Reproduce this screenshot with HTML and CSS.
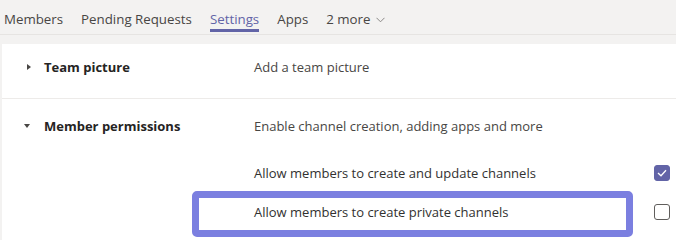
FILE: index.html
```html
<!DOCTYPE html>
<html lang="en">
<head>
    <meta charset="UTF-8">
    <meta name="viewport" content="width=device-width, initial-scale=1.0">
    <title>Team settings</title>
    <link rel="stylesheet" href="styles.css">
</head>
<body>
    <nav class="tabs">
        <span class="tab">Members</span>
        <span class="tab">Pending Requests</span>
        <span class="tab active">Settings</span>
        <span class="tab">Apps</span>
        <span class="tab more">2 more
            <svg width="9" height="6" viewBox="0 0 9 6"><path d="M0.5 0.8 L4.5 4.8 L8.5 0.8" fill="none" stroke="#8a8886" stroke-width="1"/></svg>
        </span>
    </nav>
    <div class="panel">
        <div class="section">
            <div class="head">
                <span class="caret right"></span>
                <span class="name">Team picture</span>
            </div>
            <div class="desc">Add a team picture</div>
        </div>
        <div class="section open">
            <div class="head">
                <span class="caret down"></span>
                <span class="name">Member permissions</span>
            </div>
            <div class="desc">Enable channel creation, adding apps and more</div>
        </div>
        <div class="option">
            <span class="opt-text">Allow members to create and update channels</span>
            <span class="check checked">
                <svg width="10" height="8" viewBox="0 0 10 8"><path d="M1 4 L4 6.8 L9 1.2" fill="none" stroke="#fff" stroke-width="1.3"/></svg>
            </span>
        </div>
        <div class="option marked">
            <span class="opt-text">Allow members to create private channels</span>
            <span class="check"></span>
            <span class="highlight"></span>
        </div>
    </div>
</body>
</html>
```
FILE: styles.css
```css
body {
    margin: 0;
    background-color: #f3f2f1;
    font-family: "Open Sans", "Noto Sans", sans-serif;
    color: #252423;
}
.tabs {
    display: flex;
    align-items: flex-start;
    gap: 18px;
    height: 35px;
    padding-left: 4px;
    border-bottom: 1px solid #e6e4e2;
    box-sizing: border-box;
}
.tab {
    font-size: 13.3px;
    line-height: 18px;
    color: #484644;
    padding-top: 10px;
    height: 29px;
    box-sizing: border-box;
}
.tab.active {
    color: #6264a7;
    border-bottom: 3px solid #6264a7;
    height: 32px;
}
.tab.more {
    display: flex;
    align-items: center;
    gap: 5px;
    height: 28px;
}
.tab.more svg {
    margin-top: 1px;
}
.panel {
    background: #fff;
    margin: 9px 0 0 2px;
    height: 200px;
}
.section {
    display: flex;
    box-sizing: border-box;
    height: 55px;
    padding-top: 14px;
    align-items: flex-start;
    border-bottom: 1px solid #edebe9;
}
.section.open {
    border-bottom: none;
    height: 54px;
    padding-top: 18px;
}
.head {
    display: flex;
    align-items: center;
    width: 252px;
}
.caret {
    width: 0;
    height: 0;
}
.caret.right {
    border-top: 3px solid transparent;
    border-bottom: 3px solid transparent;
    border-left: 4px solid #484644;
    margin-left: 25px;
    margin-right: 13px;
}
.caret.down {
    border-left: 3px solid transparent;
    border-right: 3px solid transparent;
    border-top: 4px solid #484644;
    margin-left: 22px;
    margin-right: 14px;
}
.name {
    font-size: 13px;
    line-height: 18px;
    font-weight: 700;
}
.desc {
    font-size: 13px;
    line-height: 18px;
    color: #484644;
}
.option {
    display: flex;
    align-items: center;
    justify-content: space-between;
    height: 39px;
    padding-left: 252px;
    padding-right: 6px;
    position: relative;
}
.opt-text {
    font-size: 13px;
    color: #323130;
}
.check {
    width: 16px;
    height: 16px;
    box-sizing: border-box;
    border: 1px solid #605e5c;
    border-radius: 3px;
    display: flex;
    align-items: center;
    justify-content: center;
}
.check.checked {
    background: #6264a7;
    border-color: #6264a7;
}
.highlight {
    position: absolute;
    left: 190px;
    top: -1px;
    width: 441px;
    height: 46px;
    box-sizing: border-box;
    border: 7px solid #7b7fe0;
    border-radius: 5px;
}
```
